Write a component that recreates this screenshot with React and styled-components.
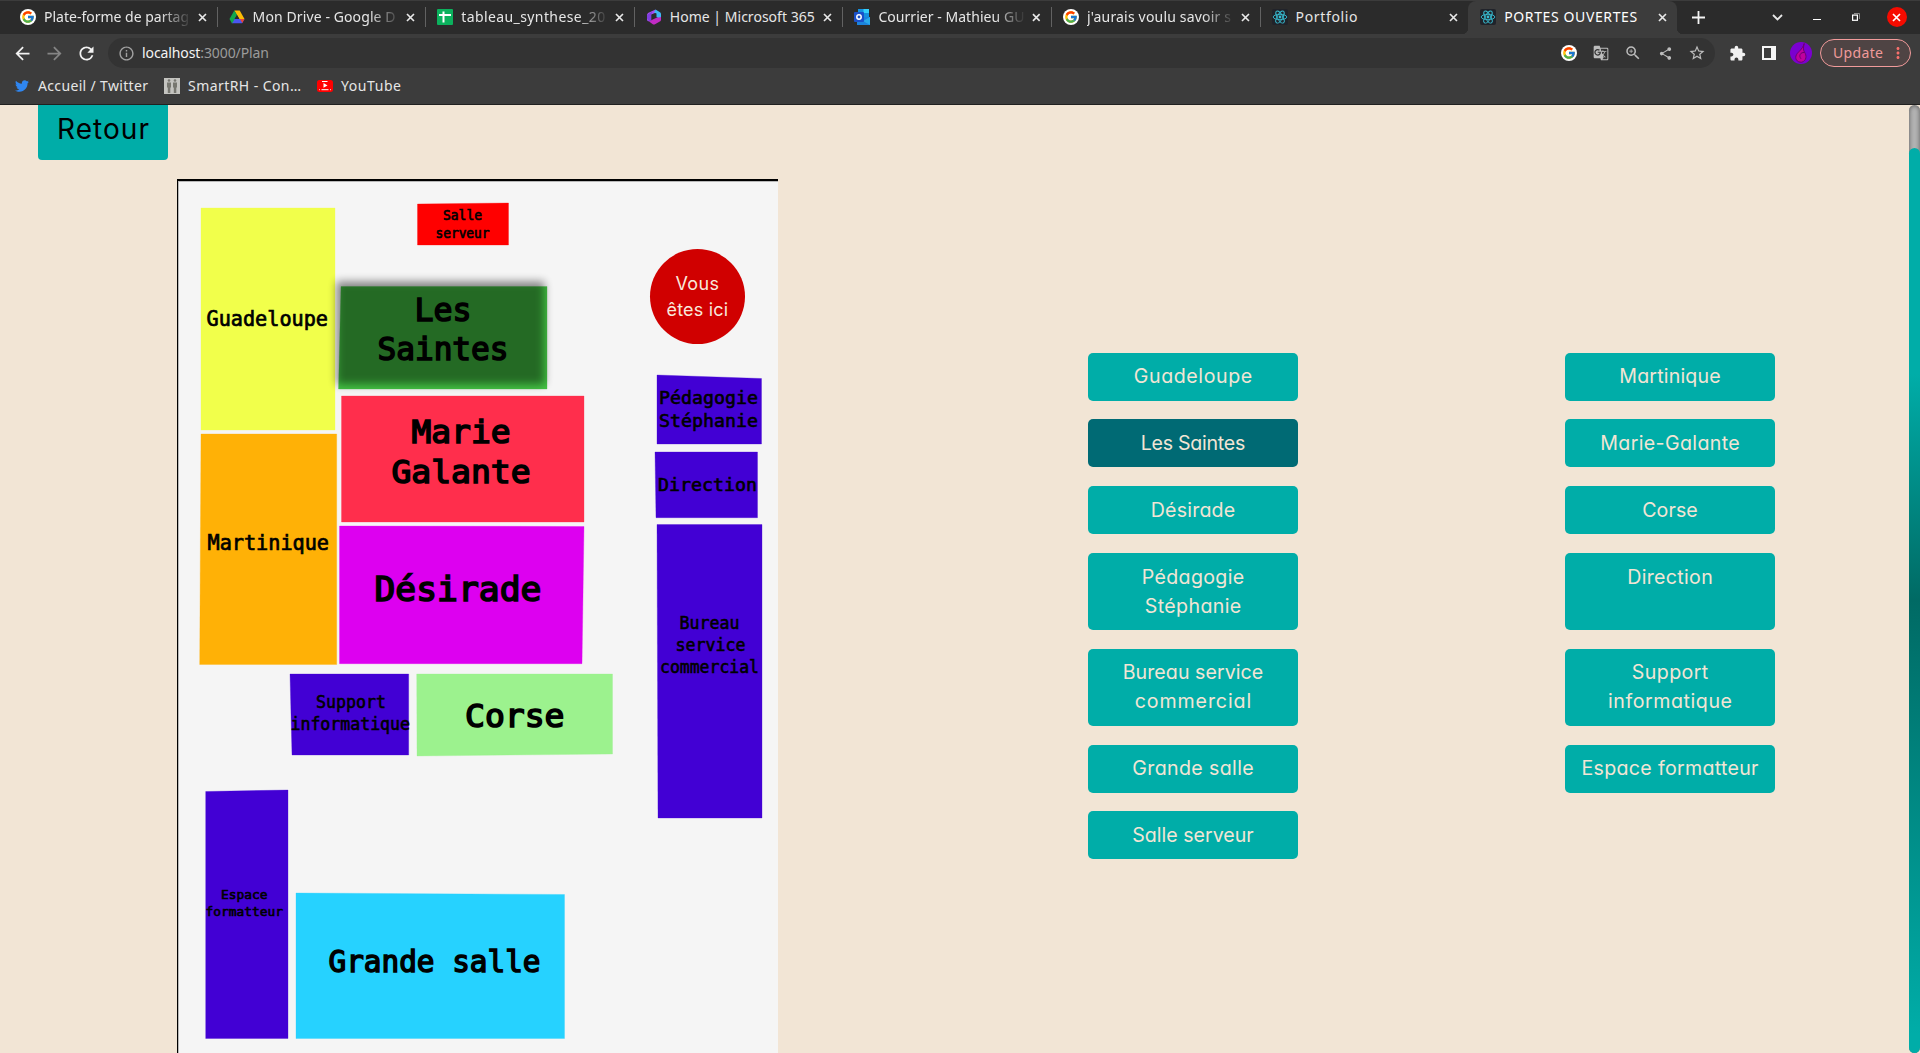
import React, { useLayoutEffect, useRef, useState } from "react";
import styled, { createGlobalStyle, css } from "styled-components";
import {
  MdArrowBack, MdArrowForward, MdRefresh, MdInfoOutline, MdGTranslate,
  MdZoomIn, MdShare, MdStarBorder, MdExtension, MdMoreVert,
} from "react-icons/md";
import { FcGoogle } from "react-icons/fc";
import { FaTwitter } from "react-icons/fa";

const colors = {
  strip: "#2b2b2b",
  toolbar: "#3c3c3c",
  omnibox: "#333333",
  text: "#e6e6e6",
  sand: "#f2e5d5",
  teal: "#00ada8",
  tealDark: "#006a74",
  office: "#4200d4",
};

const uiFont = `"Noto Sans", "Open Sans", sans-serif`;
const roundFont = `Inter, "Open Sans", sans-serif`;

const GlobalStyle = createGlobalStyle`
  *, *::before, *::after { box-sizing: border-box; }
  html, body { margin: 0; background: ${colors.sand}; overflow: hidden; }
`;

/* Text whose tracking adapts so that it fills a given width. */
const Line = styled.span`
  display: inline-block;
  white-space: pre;
`;

function Fitted({ width, children }) {
  const ref = useRef(null);
  const [tracking, setTracking] = useState(0);
  useLayoutEffect(() => {
    const natural = ref.current.getBoundingClientRect().width;
    setTracking((width - natural) / (ref.current.textContent.length - 1));
  }, [width]);
  return (
    <Line ref={ref} style={{ letterSpacing: `${tracking}px`, marginRight: `${-tracking}px` }}>
      {children}
    </Line>
  );
}

/* ---------- Browser window ---------- */

const Window = styled.div`
  width: 1920px;
  height: 1053px;
  display: flex;
  flex-direction: column;
  overflow: hidden;
`;

const TabStrip = styled.div`
  height: 34px;
  flex: none;
  display: flex;
  align-items: stretch;
  padding-left: 8px;
  background: ${colors.strip};
  border-top: 1px solid ${colors.toolbar};
  font: 14px/32px ${uiFont};
  color: ${colors.text};
`;

const Tab = styled.div`
  width: 208.6px;
  position: relative;
  display: flex;
  align-items: center;
  padding: 0 10px 1px 12px;
  gap: 8px;
  ${(p) => p.$active ? css`
    background: ${colors.toolbar};
    border-radius: 8px 8px 0 0;
    color: #fff;
    &::before, &::after {
      content: "";
      position: absolute;
      bottom: 0;
      width: 6px;
      height: 6px;
    }
    &::before { left: -6px; background: radial-gradient(circle at 0 0, transparent 6px, ${colors.toolbar} 6.5px); }
    &::after { right: -6px; background: radial-gradient(circle at 100% 0, transparent 6px, ${colors.toolbar} 6.5px); }
  ` : css`
    &::after {
      content: "";
      position: absolute;
      right: -1px;
      top: 6px;
      width: 1px;
      height: 20px;
      background: ${p.$last ? "transparent" : "#626262"};
    }
  `}
`;

const TabTitle = styled.div`
  width: 146px;
  white-space: nowrap;
  mask-image: ${(p) => p.$fade ? "linear-gradient(90deg, #000 116px, transparent 148px)" : "none"};
`;

const Slot = styled.div`
  width: ${(p) => p.$w || 32}px;
  height: ${(p) => p.$h || 30}px;
  flex: none;
  display: flex;
  align-items: center;
  justify-content: center;
  color: ${(p) => p.$color || "#f2f2f2"};
  svg { flex: none; display: block; }
`;

const Spacer = styled.div`flex: 1;`;

const CloseButton = styled.div`
  width: 20px;
  height: 20px;
  margin-right: 2px;
  border-radius: 50%;
  background: #f60b00;
  display: flex;
  align-items: center;
  justify-content: center;
`;

const Toolbar = styled.div`
  height: 38px;
  flex: none;
  display: flex;
  align-items: center;
  padding: 0 9px 0 6px;
  background: ${colors.toolbar};
`;

const Omnibox = styled.div`
  width: 1607px;
  height: 30px;
  margin: 0 6px;
  padding: 0 2px 0 10px;
  display: flex;
  align-items: center;
  border-radius: 15px;
  background: ${colors.omnibox};
`;

const Url = styled.div`
  margin-left: 8px;
  font: 14px/30px ${uiFont};
  color: #9b9b9b;
  b { font-weight: 400; color: #f4f4f4; }
`;

const RoundBadge = styled.div`
  width: ${(p) => p.$size}px;
  height: ${(p) => p.$size}px;
  border-radius: 50%;
  background: ${(p) => p.$bg};
  display: flex;
  flex: none;
  align-items: center;
  justify-content: center;
`;

const UpdateButton = styled.div`
  width: 91px;
  height: 28px;
  margin-left: 3px;
  padding-left: 12px;
  display: flex;
  align-items: center;
  justify-content: space-between;
  border: 1px solid #f29b9b;
  border-radius: 14px;
  background: #4f4444;
  color: #f09a9a;
  font: 14px/26px ${uiFont};
  svg { margin-right: 3px; color: #f8706c; }
`;

const Bookmarks = styled.div`
  height: 33px;
  flex: none;
  display: flex;
  align-items: center;
  padding: 0 0 4px 14px;
  background: ${colors.toolbar};
  border-bottom: 1px solid #202020;
  font: 14px/28px ${uiFont};
  color: ${colors.text};
`;

const Bookmark = styled.div`
  display: flex;
  align-items: center;
  gap: 8px;
  margin-right: 16px;
`;

/* ---------- Icons ---------- */

const GoogleIcon = ({ size = 16 }) => (
  <RoundBadge $size={size} $bg="#fff"><FcGoogle size={size - 2} /></RoundBadge>
);

const DriveIcon = () => (
  <svg width="16" height="16" viewBox="0 0 16 16">
    <path d="M5.3 1.5h5.4l4.8 8.5h-5.2z" fill="#fbbc05" />
    <path d="M3.2 10h12.3l-2.4 4.3H2.8z" fill="#4a56f0" />
    <path d="M11 10h4.5l-2.2 4z" fill="#ea4335" />
    <path d="M5.3 1.5.5 10l2.5 4.4L8 5.9z" fill="#11a84c" />
    <path d="m8 5.9 2.4 4.1H5.6z" fill="#2b2b2b" />
  </svg>
);

const SheetIcon = () => (
  <svg width="16" height="16" viewBox="0 0 16 16">
    <rect width="16" height="16" rx="1" fill="#0bb15d" />
    <path d="M2 6h12M6.5 2.500v11" stroke="#fff" strokeWidth="2" />
  </svg>
);

const OfficeIcon = () => (
  <svg width="16" height="16" viewBox="0 0 16 16">
    <path d="M9.5.5 3 3.5C1.7 4.2 1 5 1 6.3v4.2c0 1 .8 1.8 1.7 1.8 1 0 1.8-.5 2.5-1V5.5L9 4z" fill="#a64df2" />
    <path d="M9.5.5 14 3.2c.7.5 1 1.1 1 2v5.5L10.500 8V4.500L8 3.500z" fill="#3fb8f5" />
    <path d="M15 8v2.400c0 1-.4 1.600-1.200 2L9 15.300c-.7.400-1.600.300-2.200 0L2.700 12.300c1 0 1.800-.5 2.500-1l5.300-2.600z" fill="#c12bc4" />
    <path d="M9.500.500 6.500 2.500 5.200 5.500v5.800L3 12.200 1 9.500V6z" fill="#7038d8" opacity=".7" />
  </svg>
);

const OutlookIcon = () => (
  <svg width="16" height="16" viewBox="0 0 16 16">
    <path d="M4 0h11v8H4z" fill="#1490df" />
    <path d="M9.500 0H15v4H9.500z" fill="#35d0fb" />
    <path d="M3 8h13v8H3z" fill="#1b83dc" />
    <path d="m16 8-7 4 7 4z" fill="#28a8ea" />
    <rect y="3" width="10" height="10" rx="1" fill="#1a50c8" />
    <circle cx="5" cy="8" r="2.200" fill="none" stroke="#fff" strokeWidth="1.500" />
  </svg>
);

const ReactIcon = () => (
  <svg width="16" height="16" viewBox="0 0 16 16">
    <rect width="16" height="16" rx="2" fill="#20232a" />
    <g fill="none" stroke="#38bdd2" strokeWidth=".9">
      <ellipse cx="8" cy="8" rx="6.800" ry="2.700" />
      <ellipse cx="8" cy="8" rx="6.800" ry="2.700" transform="rotate(60 8 8)" />
      <ellipse cx="8" cy="8" rx="6.800" ry="2.700" transform="rotate(120 8 8)" />
    </g>
    <circle cx="8" cy="8" r="1.400" fill="#38bdd2" />
  </svg>
);

const Cross = ({ color = "#e8e8e8" }) => (
  <svg width="9" height="9" viewBox="0 0 9 9">
    <path d="m1 1 7 7M8 1 1 8" stroke={color} strokeWidth="1.700" />
  </svg>
);

const PeopleIcon = () => (
  <svg width="16" height="16" viewBox="0 0 16 16">
    <rect width="16" height="16" fill="#c4c4c0" />
    <g fill="#777770">
      <circle cx="5" cy="2.500" r="1.300" /><circle cx="11" cy="2.500" r="1.300" />
      <path d="M3 4.500h4v5H6.300V15H3.800V9.500H3zM9 4.500h4v5h-.7V15H9.800V9.500H9z" />
    </g>
  </svg>
);

const YoutubeIcon = () => (
  <svg width="16" height="12" viewBox="0 0 16 12">
    <rect width="16" height="12" rx="2.500" fill="#f00" />
    <path d="M5 1.500h5.500M2 9.700h.8M4.500 9.700h7M13.200 9.700h.8" stroke="#fff" />
    <path d="M6.500 3v4.800l4-2.400z" fill="#fff" />
  </svg>
);

const SidePanelIcon = () => (
  <svg width="14" height="14" viewBox="0 0 14 14">
    <path d="M0 0h14v14H0zM2 2v10h7V2z" fill="#f6f6f6" fillRule="evenodd" />
  </svg>
);

const FlameIcon = () => (
  <svg width="22" height="22" viewBox="0 0 22 22">
    <path d="M14.200 1.500c-.8 3.500-1.200 6 .2 8.500 2.600 3.500 2.200 8.700-2.600 10.200-5.200.3-7.300-4-5.300-7.500 1.200-2.700 6-5 7.700-11.200z" fill="#c0009e" stroke="#6a0070" />
    <path d="M14.200 10.500c-3.500-.3-6 3-3.200 6.300" fill="none" stroke="#6a0070" />
  </svg>
);

/* ---------- Page ---------- */

const Viewport = styled.div`
  flex: 1;
  min-height: 0;
  display: flex;
  background: ${colors.sand};
`;

const Page = styled.main`
  flex: 1;
  display: flex;
  overflow: hidden;
`;

const PlanColumn = styled.section`
  width: 778px;
  flex: none;
  display: flex;
  flex-direction: column;
  align-items: flex-start;
`;

const BackButton = styled.button`
  width: 130px;
  height: 55px;
  margin: 0 0 19px 38px;
  padding: 0 0 7px;
  flex: none;
  border: 0;
  border-radius: 0 0 4px 4px;
  background: ${colors.teal};
  color: #000;
  font: 28px/48px ${roundFont};
  font-feature-settings: "cv11";
`;

const PlanFrame = styled.div`
  width: 601px;
  height: 900px;
  flex: none;
  margin-left: 177px;
  background: #f5f5f5;
  border-top: 2px solid #000;
  border-left: 1px solid #000;
  box-shadow: inset 1px 1px 0 #b8b8b8;
  svg { display: block; }
`;

const RoomLabel = styled.text`
  font-family: "DejaVu Sans Mono", monospace;
  font-size: ${(p) => p.$size}px;
  stroke: #000;
  stroke-width: ${(p) => p.$size * p.$weight}px;
`;

const HereLabel = styled.text`
  font-family: ${roundFont};
  font-feature-settings: "cv11";
  font-size: 18px;
  fill: #f8e9dc;
`;

const Choices = styled.section`
  display: grid;
  grid-template-columns: 210px 210px;
  column-gap: 267px;
  row-gap: 18.800px;
  align-content: start;
  padding: 247.700px 0 0 310px;
`;

const Choice = styled.button`
  border: 0;
  border-radius: 5px;
  padding: 9.500px 0;
  display: flex;
  flex-direction: column;
  align-items: center;
  justify-content: flex-start;
  background: ${(p) => p.$selected ? colors.tealDark : colors.teal};
  color: ${colors.sand};
  font: 19.600px/29px ${roundFont};
  font-feature-settings: "cv11";
`;

const ScrollTrack = styled.div`
  width: 11px;
  flex: none;
  padding-top: 43px;
  border-radius: 6px;
  background: #b4b4b4;
  box-shadow: inset 0 0 5px #555;
`;

const ScrollFill = styled.div`
  height: 100%;
  border-radius: 6px;
  background: linear-gradient(180deg, ${colors.teal} 25%, #006a64 50%, ${colors.teal} 98%);
`;

/* ---------- Data ---------- */

const tabs = [
  { icon: <GoogleIcon />, title: "Plate-forme de partag", width: 145, fade: true },
  { icon: <DriveIcon />, title: "Mon Drive - Google D", width: 143, fade: true },
  { icon: <SheetIcon />, title: "tableau_synthese_20", width: 144, fade: true },
  { icon: <OfficeIcon />, title: "Home | Microsoft 365", width: 145 },
  { icon: <OutlookIcon />, title: "Courrier - Mathieu GU", width: 146, fade: true },
  { icon: <GoogleIcon />, title: "j'aurais voulu savoir s", width: 144, fade: true },
  { icon: <ReactIcon />, title: "Portfolio", width: 62 },
  { icon: <ReactIcon />, title: "PORTES OUVERTES", width: 133, active: true },
];

/* Stroke thickness of a room label, as a share of its font size. */
const MEDIUM = 0.035;
const BOLD = 0.05;

const rooms = [
  { points: "201,208 335,208 335,430 201,430", fill: "#f1ff4b", size: 20.5, weight: MEDIUM, lines: [["Guadeloupe", 206.500, 121.500, 325.5]] },
  { points: "417.5,204 508.5,203 508.5,245 417.5,245", fill: "#ff0000", size: 13.2, weight: BOLD, lines: [["Salle", 443, 39, 220.2], ["serveur", 435.500, 54, 238]] },
  { points: "341,286.5 547,286.5 547,389 338.5,389", fill: "#44c544", size: 32, weight: BOLD, lines: [["Les", 414.500, 57, 320.5], ["Saintes", 377.500, 131, 359.5]] },
  { points: "341.5,396 584,396 584,522 341.5,522", fill: "#ff2e4c", size: 32.5, weight: BOLD, lines: [["Marie", 411.500, 99, 442.5], ["Galante", 391.500, 139, 483]] },
  { points: "201,434 336.7,434 336.7,664.5 199.7,664.5", fill: "#ffb106", size: 20.5, weight: MEDIUM, lines: [["Martinique", 207.500, 121.5, 549.5]] },
  { points: "339.5,526 584,526.5 582,663.7 339.5,663.7", fill: "#dd00f0", size: 34, weight: BOLD, lines: [["Désirade", 374.500, 167, 601]] },
  { points: "290,674 408.7,674 408.7,755 292,755", fill: colors.office, size: 16.8, weight: MEDIUM, lines: [["Support", 316, 70, 708], ["informatique", 290.5, 119.5, 730]] },
  { points: "416.7,674 612.5,674 612.5,754 417,756", fill: "#9cf28e", size: 32.5, weight: BOLD, lines: [["Corse", 465, 99.500, 726.5]] },
  { points: "205.7,791.5 288,790 288,1038.5 205.7,1038.5", fill: colors.office, size: 13, weight: BOLD, lines: [["Espace", 221, 46.500, 898.5], ["formatteur", 205.5, 77.500, 916]] },
  { points: "296,893 564.5,894.5 564.5,1038.5 296,1038.5", fill: "#26d2ff", size: 30, weight: BOLD, lines: [["Grande salle", 328.500, 212, 972]] },
  { points: "657,375 761.5,378.5 761.5,444 657,444", fill: colors.office, size: 17, weight: MEDIUM, lines: [["Pédagogie", 659, 99, 404], ["Stéphanie", 659, 99, 427]] },
  { points: "655,452 757.5,452 757.5,517.7 656,517.7", fill: colors.office, size: 18, weight: MEDIUM, lines: [["Direction", 658, 99, 491]] },
  { points: "657,524.5 762,524.5 762,818 658,818", fill: colors.office, size: 17, weight: MEDIUM, lines: [["Bureau", 679.5, 60, 628.7], ["service", 675.5, 70, 650.7], ["commercial", 660, 99, 672.7]] },
];

const choices = [
  [["Guadeloupe", 118.5]], [["Martinique", 101.500]],
  [["Les Saintes", 104.5]], [["Marie-Galante", 139.500]],
  [["Désirade", 84.5]], [["Corse", 55.500]],
  [["Pédagogie", 102.500], ["Stéphanie", 96.500]], [["Direction", 85.500]],
  [["Bureau service", 140.500], ["commercial", 116.500]], [["Support", 76.500], ["informatique", 124]],
  [["Grande salle", 121.500]], [["Espace formatteur", 177]],
  [["Salle serveur", 121.500]],
];

function FloorPlan() {
  return (
    <PlanFrame>
      <svg width="600" height="872" viewBox="178 181 600 872">
        <defs>
          <filter id="soft" x="-10%" y="-15%" width="120%" height="130%">
            <feGaussianBlur stdDeviation="4" />
          </filter>
        </defs>
        {rooms.map((room) => (
          <polygon key={room.points} points={room.points} fill={room.fill} stroke={room.fill} strokeOpacity=".3" />
        ))}
        <rect x="336.5" y="281.500" width="208" height="103" fill="#000" opacity=".46" filter="url(#soft)" />
        {rooms.map((room) => room.lines.map(([label, x, width, y]) => (
          <RoomLabel key={label} $size={room.size} $weight={room.weight} x={x} y={y} textLength={width} lengthAdjust="spacingAndGlyphs">
            {label}
          </RoomLabel>
        )))}
        <circle cx="697.5" cy="296.5" r="47.5" fill="#d00000" />
        <HereLabel x="675.5" y="290" textLength="43.500">Vous</HereLabel>
        <HereLabel x="666.5" y="316" textLength="61.500">êtes ici</HereLabel>
      </svg>
    </PlanFrame>
  );
}

function BrowserChrome() {
  return (
    <>
      <TabStrip>
        {tabs.map((tab, i) => (
          <Tab key={tab.title} $active={tab.active} $last={i === tabs.length - 2}>
            <Slot $w={16}>{tab.icon}</Slot>
            <TabTitle $fade={tab.fade}><Fitted width={tab.width}>{tab.title}</Fitted></TabTitle>
            <Cross />
          </Tab>
        ))}
        <Slot $w={44} $h={32}>
          <svg width="13" height="13" viewBox="0 0 13 13"><path d="M6.500 0v13M0 6.500h13" stroke="#f4f4f4" strokeWidth="1.800" /></svg>
        </Slot>
        <Spacer />
        <Slot $w={39} $h={32}>
          <svg width="11" height="7" viewBox="0 0 11 7"><path d="m1 1 4.500 4.500L10 1" fill="none" stroke="#e8e8e8" strokeWidth="1.800" /></svg>
        </Slot>
        <Slot $w={39} $h={37}>
          <svg width="8" height="1"><rect width="8" height="1" fill="#fff" /></svg>
        </Slot>
        <Slot $w={39} $h={32}>
          <svg width="8" height="8" viewBox="0 0 8 8">
            <path d="M2 .5h5.500V6" fill="none" stroke="#8a8a8a" />
            <rect x=".600" y="2.100" width="4.800" height="5.200" fill="none" stroke="#fff" strokeWidth="1.200" />
          </svg>
        </Slot>
        <Slot $w={45} $h={32}><CloseButton><Cross color="#fff" /></CloseButton></Slot>
      </TabStrip>
      <Toolbar>
        <Slot><MdArrowBack size={21} /></Slot>
        <Slot $color="#858585"><MdArrowForward size={21} /></Slot>
        <Slot><MdRefresh size={21} /></Slot>
        <Omnibox>
          <Slot $w={16} $color="#a2a2a2"><MdInfoOutline size={17} /></Slot>
          <Url><Fitted width={127}><b>localhost</b>:3000/Plan</Fitted></Url>
          <Spacer />
          <Slot><GoogleIcon /></Slot>
          <Slot $color="#bdbdbd"><MdGTranslate size={16} /></Slot>
          <Slot $color="#bdbdbd"><MdZoomIn size={18} /></Slot>
          <Slot $color="#bdbdbd"><MdShare size={15} /></Slot>
          <Slot $color="#bdbdbd"><MdStarBorder size={18} /></Slot>
        </Omnibox>
        <Slot><MdExtension size={17} /></Slot>
        <Slot><SidePanelIcon /></Slot>
        <Slot><RoundBadge $size={22} $bg="#7b00d0"><FlameIcon /></RoundBadge></Slot>
        <UpdateButton><Fitted width={50}>Update</Fitted><MdMoreVert size={18} /></UpdateButton>
      </Toolbar>
      <Bookmarks>
        <Bookmark><Slot $w={16} $color="#2f86f0"><FaTwitter size={14} /></Slot><Fitted width={110}>Accueil / Twitter</Fitted></Bookmark>
        <Bookmark><Slot $w={16}><PeopleIcon /></Slot><Fitted width={113}>SmartRH - Con…</Fitted></Bookmark>
        <Bookmark><Slot $w={16}><YoutubeIcon /></Slot><Fitted width={60}>YouTube</Fitted></Bookmark>
      </Bookmarks>
    </>
  );
}

export default function App() {
  return (
    <Window>
      <GlobalStyle />
      <BrowserChrome />
      <Viewport>
        <Page>
          <PlanColumn>
            <BackButton><Fitted width={92}>Retour</Fitted></BackButton>
            <FloorPlan />
          </PlanColumn>
          <Choices>
            {choices.map((lines) => (
              <Choice key={lines[0][0]} $selected={lines[0][0] === "Les Saintes"}>
                {lines.map(([label, width]) => <Fitted key={label} width={width}>{label}</Fitted>)}
              </Choice>
            ))}
          </Choices>
        </Page>
        <ScrollTrack><ScrollFill /></ScrollTrack>
      </Viewport>
    </Window>
  );
}
